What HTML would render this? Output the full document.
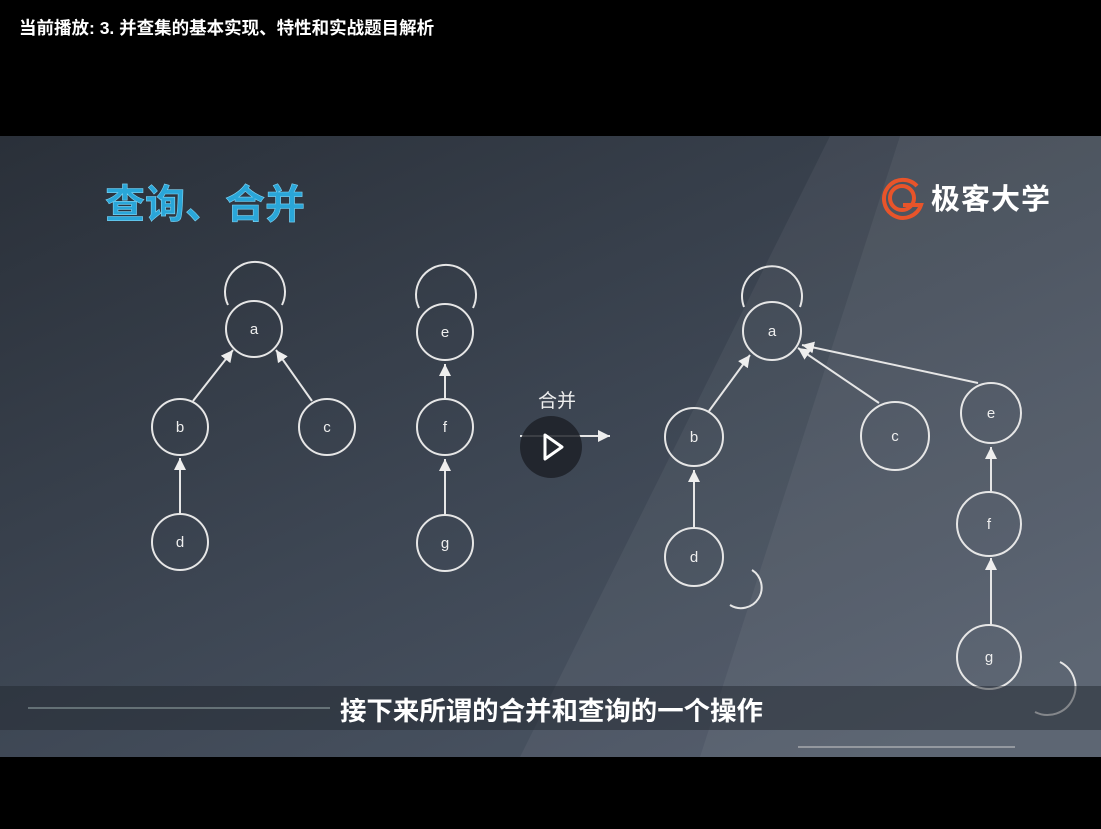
<!DOCTYPE html>
<html><head><meta charset="utf-8"><style>
html,body{margin:0;padding:0;background:#000;width:1101px;height:829px;overflow:hidden}
.t{position:absolute;left:19px;top:15px;color:#fff;font:bold 17.5px "Liberation Sans","Noto Sans CJK SC",sans-serif;white-space:nowrap}
svg{position:absolute;left:0;top:136px}
</style></head><body>
<div class="t">当前播放: 3. 并查集的基本实现、特性和实战题目解析</div>
<svg width="1101" height="621" viewBox="0 136 1101 621">
<defs>
<linearGradient id="bg" x1="0" y1="0" x2="0.8" y2="1">
<stop offset="0" stop-color="#2a3039"/><stop offset="0.55" stop-color="#3d4653"/><stop offset="1" stop-color="#4c5665"/>
</linearGradient>
<marker id="ar" markerWidth="8" markerHeight="8" refX="6" refY="3" orient="auto"><path d="M0,0 L6,3 L0,6z" fill="#eee"/></marker>
</defs>
<rect x="0" y="136" width="1101" height="621" fill="url(#bg)"/>
<polygon points="830,136 1101,136 1101,757 520,757" fill="#fff" opacity="0.05"/>
<polygon points="900,136 1101,136 1101,757 700,757" fill="#fff" opacity="0.05"/>
<text x="105" y="218" font-family="Liberation Sans,Noto Sans CJK SC,sans-serif" font-size="40" font-weight="bold" fill="#2aa6d8" stroke="#7fd4f5" stroke-width="0.6" textLength="200">查询、合并</text>
<g fill="none" stroke="#e8542a" stroke-width="4"><path d="M917,186 A19,19 0 1 0 921,205 L903,205"/><circle cx="902" cy="198" r="12"/></g>
<text x="931" y="209" font-family="Liberation Sans,Noto Sans CJK SC,sans-serif" font-size="29" font-weight="bold" fill="#fff" textLength="119">极客大学</text>
<g fill="none" stroke="#e6e6e6" stroke-width="2">
<circle cx="254" cy="329" r="28"/><circle cx="180" cy="427" r="28"/><circle cx="327" cy="427" r="28"/><circle cx="180" cy="542" r="28"/>
<circle cx="445" cy="332" r="28"/><circle cx="445" cy="427" r="28"/><circle cx="445" cy="543" r="28"/>
<circle cx="772" cy="331" r="29"/><circle cx="694" cy="437" r="29"/><circle cx="895" cy="436" r="34"/><circle cx="694" cy="557" r="29"/>
<circle cx="991" cy="413" r="30"/><circle cx="989" cy="524" r="32"/><circle cx="989" cy="657" r="32"/>
<path d="M228,305 A30,30 0 1 1 282,305"/><path d="M419,308 A30,30 0 1 1 473,308"/><path d="M744,307 A30,30 0 1 1 800,307"/>
<path d="M730,605 A20,20 0 0 0 752,570"/><path d="M1035,712 A25,25 0 0 0 1060,662"/>
<g marker-end="url(#ar)"><line x1="193" y1="401" x2="233" y2="350"/><line x1="312" y1="401" x2="276" y2="350"/><line x1="180" y1="514" x2="180" y2="458"/>
<line x1="445" y1="399" x2="445" y2="364"/><line x1="445" y1="515" x2="445" y2="459"/>
<line x1="709" y1="411" x2="750" y2="355"/><line x1="879" y1="403" x2="798" y2="348"/><line x1="694" y1="528" x2="694" y2="470"/>
<line x1="978" y1="383" x2="802" y2="345"/><line x1="991" y1="492" x2="991" y2="447"/><line x1="991" y1="625" x2="991" y2="558"/>
<line x1="520" y1="436" x2="610" y2="436"/></g>
</g>
<g font-family="Liberation Sans,sans-serif" font-size="15" fill="#eee" text-anchor="middle">
<text x="254" y="334">a</text><text x="180" y="432">b</text><text x="327" y="432">c</text><text x="180" y="547">d</text>
<text x="445" y="337">e</text><text x="445" y="432">f</text><text x="445" y="548">g</text>
<text x="772" y="336">a</text><text x="694" y="442">b</text><text x="895" y="441">c</text><text x="694" y="562">d</text>
<text x="991" y="418">e</text><text x="989" y="529">f</text><text x="989" y="662">g</text>
</g>
<text x="557" y="407" font-family="Liberation Sans,Noto Sans CJK SC,sans-serif" font-size="19" fill="#eee" text-anchor="middle">合并</text>
<circle cx="551" cy="447" r="31" fill="#1d2128" opacity="0.85"/>
<path d="M545,435 L562,447 L545,459z" fill="none" stroke="#fff" stroke-width="3" stroke-linejoin="round"/>
<rect x="0" y="686" width="1101" height="44" fill="#222830" opacity="0.5"/>
<line x1="28" y1="708" x2="330" y2="708" stroke="#9aa" stroke-width="1"/>
<line x1="798" y1="747" x2="1015" y2="747" stroke="#ccc" stroke-width="1"/>
<text x="340" y="720" font-family="Liberation Sans,Noto Sans CJK SC,sans-serif" font-size="26" font-weight="bold" fill="#fff" textLength="423" lengthAdjust="spacingAndGlyphs">接下来所谓的合并和查询的一个操作</text>
</svg>
</body></html>
